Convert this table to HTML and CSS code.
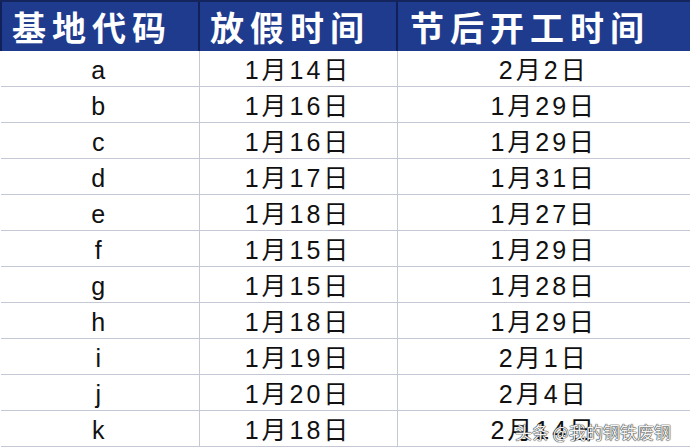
FILE: index.html
```html
<!DOCTYPE html>
<html lang="zh">
<head>
<meta charset="utf-8">
<link rel="stylesheet" href="styles.css">
</head>
<body>
<div class="sheet">
  <table class="grid">
    <colgroup>
      <col class="w1">
      <col class="w2">
      <col class="w3">
    </colgroup>
    <thead>
      <tr>
        <th class="c1">基地代码</th>
        <th class="c2">放假时间</th>
        <th class="c3">节后开工时间</th>
      </tr>
    </thead>
    <tbody>
      <tr><td>a</td><td>1月14日</td><td>2月2日</td></tr>
      <tr><td>b</td><td>1月16日</td><td>1月29日</td></tr>
      <tr><td>c</td><td>1月16日</td><td>1月29日</td></tr>
      <tr><td>d</td><td>1月17日</td><td>1月31日</td></tr>
      <tr><td>e</td><td>1月18日</td><td>1月27日</td></tr>
      <tr><td>f</td><td>1月15日</td><td>1月29日</td></tr>
      <tr><td>g</td><td>1月15日</td><td>1月28日</td></tr>
      <tr><td>h</td><td>1月18日</td><td>1月29日</td></tr>
      <tr><td>i</td><td>1月19日</td><td>2月1日</td></tr>
      <tr><td>j</td><td>1月20日</td><td>2月4日</td></tr>
      <tr><td>k</td><td>1月18日</td><td>2月14日</td></tr>
    </tbody>
  </table>
  <div class="watermark">头条 @我的钢铁废钢</div>
</div>
</body>
</html>
```
FILE: styles.css
```css
html, body {
  margin: 0;
  padding: 0;
  background: #ffffff;
}
.sheet {
  position: relative;
  width: 690px;
  height: 448px;
  overflow: hidden;
}
.grid {
  border-collapse: collapse;
  table-layout: fixed;
  width: 690px;
}
.w1 { width: 198px; }
.w2 { width: 198px; }
.w3 { width: 294px; }
.grid th {
  height: 49px;
  padding: 0 0 0 10px;
  background: #1f3b8e;
  color: #ffffff;
  text-align: left;
  font-family: "Noto Sans CJK SC", sans-serif;
  font-weight: 700;
  font-size: 34px;
  letter-spacing: 6px;
  border-top: 2px solid #14245c;
  border-left: 2px solid #112058;
  line-height: 49px;
  white-space: nowrap;
  overflow: hidden;
}
.grid th.c3 { padding-left: 12px; }
.grid td {
  height: 35px;
  padding: 3px 0 0 0;
  box-sizing: border-box;
  text-align: center;
  font-family: "Liberation Sans", "Noto Sans CJK SC", sans-serif;
  font-size: 25px;
  letter-spacing: 3px;
  color: #111111;
  border-bottom: 1px solid #c4c8d4;
  border-left: 1px solid #c4c8d4;
  line-height: 32px;
}
.grid td:first-child { border-left: none; }
.grid td:last-child { border-right: 2px solid #c4c8d4; }
.watermark {
  position: absolute;
  left: 515px;
  top: 419px;
  font-family: "Noto Sans CJK SC", sans-serif;
  font-size: 17px;
  color: #f4f4f4;
  text-shadow: 0 0 1px #333, 0 0 1px #333, 0 0 1px #333;
  white-space: nowrap;
}
```
